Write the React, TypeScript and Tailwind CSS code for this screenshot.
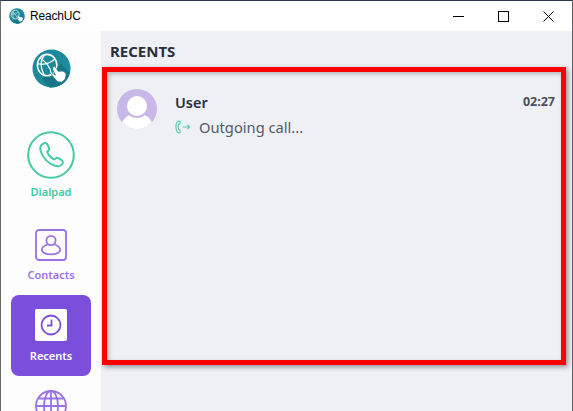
function Logo({ size }: { size: number }) {
  return (
    <svg width={size} height={size} viewBox="0 0 40 40" className="shrink-0">
      <circle cx="20" cy="20" r="19.5" fill="#1d8a9c" />
      <path d="M10 30 L18 39.4 A19.5 19.5 0 0 0 38.6 25 L30 15 Z" fill="#187688" />
      <ellipse cx="15.5" cy="16.5" rx="10" ry="11" fill="#1d8a9c" stroke="#fff" strokeWidth="1.6" />
      <path d="M13 6 C8.5 11 8.5 19 12.5 27 M6 15 C12 17 19 14 24 10 M8 9.5 C14 12 19 19 20 26" fill="none" stroke="#fff" strokeWidth="1.2" />
      <path d="M21.5 18.5 C22.5 17.6 23.6 18 24.2 19 L27 22.8 L31 22.6 C33.5 23 35 24.8 35 26.5 L34 31 L30.5 34 L26 33.5 L20.5 27 C19.8 26 21 24.6 22.2 25.4 L24 26.8 L21 21 Z" fill="#fff" stroke="#187688" strokeWidth="0.8" />
    </svg>
  );
}

function DialpadIcon() {
  return (
    <svg width="48" height="48" viewBox="0 0 48 48" fill="none" stroke="#45c9a1" strokeWidth="2">
      <circle cx="24" cy="24" r="22.8" />
      <path d="M16.5 12.4 C13.2 14 12.6 17.4 14 21 C16.4 27.2 21.6 32.6 28 34.8 C31.4 35.8 34.8 34.6 35.8 31.8 C36.2 30.4 35.6 29.6 34.6 29 L31.2 27.2 C30.2 26.6 29.4 26.8 28.6 27.6 L27.4 28.6 C24.6 27.6 21.2 24 20.2 20.8 L21.4 19.6 C22.2 18.8 22.4 18 22 17 L20.4 13.4 C19.6 12 18 11.8 16.5 12.4 Z" strokeLinejoin="round" />
    </svg>
  );
}

function ContactsIcon() {
  return (
    <svg width="32" height="32" viewBox="0 0 32 32" fill="none" stroke="#9a72e8" strokeWidth="1.8">
      <rect x="1" y="1" width="30" height="30" rx="3" />
      <circle cx="16" cy="11.5" r="4.6" />
      <path d="M12.5 15.5 C8.5 17 6.8 19 6.8 21 C6.8 23.5 10.5 25.4 16 25.4 C21.5 25.4 25.2 23.5 25.2 21 C25.2 19 23.5 17 19.5 15.5" />
    </svg>
  );
}

function GlobeIcon() {
  return (
    <svg width="32" height="32" viewBox="0 0 32 32" fill="none" stroke="#9a72e8" strokeWidth="1.8">
      <circle cx="16" cy="16" r="15" />
      <ellipse cx="16" cy="16" rx="7" ry="15" />
      <path d="M16 1 V31 M1 16 H31 M3.5 8.5 H28.5 M3.5 23.5 H28.5" />
    </svg>
  );
}

function CallOutIcon() {
  return (
    <svg width="16" height="14" viewBox="0 0 16 14" fill="none" stroke="#5fcdaa" strokeWidth="1.2">
      <path d="M3.5 1 C1.6 1.6 1 3.5 1 6.5 C1 9.5 1.6 12 3.5 13 L5.2 12.4 L4.8 9.8 L3.6 9.6 C3.2 8.4 3.2 5.4 3.6 4.2 L4.8 4 L5.2 1.6 Z" strokeLinejoin="round" />
      <path d="M7.5 7 H14.5 M12.4 5 L14.5 7 L12.4 9" />
    </svg>
  );
}

export default function App() {
  return (
    <div className="relative flex h-[411px] w-[573px] flex-col overflow-hidden border-t border-r border-l border-t-[#2b3a4d] border-r-[#5a5f66] border-l-[#6b6b6b] bg-white font-['Noto_Sans','Open_Sans',sans-serif] text-[#2a2f3a]">
      {/* Title bar */}
      <div className="flex h-[30px] shrink-0 items-center bg-white pl-[8px]">
        <Logo size={16} />
        <span className="ml-[5px] font-['Liberation_Sans',sans-serif] text-[12px] tracking-[-0.2px] text-black">ReachUC</span>
        <div className="ml-auto flex items-center">
          <svg width="11" height="11" viewBox="0 0 11 11" className="mr-[34px]" stroke="#000" fill="none">
            <path d="M0 5.5 H11" />
          </svg>
          <svg width="11" height="11" viewBox="0 0 11 11" className="mr-[34px]" stroke="#000" fill="none">
            <rect x="0.5" y="0.5" width="10" height="10" />
          </svg>
          <svg width="11" height="11" viewBox="0 0 11 11" className="mr-[18px]" stroke="#000" fill="none">
            <path d="M0.5 0.5 L10.5 10.5 M10.5 0.5 L0.5 10.5" />
          </svg>
        </div>
      </div>

      <div className="flex min-h-0 flex-1">
        {/* Sidebar */}
        <aside className="flex w-[100px] shrink-0 flex-col items-center overflow-hidden bg-[#fdfdfe]">
          <div className="mt-[18px]">
            <Logo size={39} />
          </div>
          <div className="mt-[43px] shrink-0">
            <DialpadIcon />
          </div>
          <span className="mt-[6px] text-[11px] leading-[14px] font-semibold text-[#45c9a1]">Dialpad</span>
          <div className="mt-[30px] shrink-0">
            <ContactsIcon />
          </div>
          <span className="mt-[7px] text-[11px] leading-[14px] font-semibold text-[#9a72e8]">Contacts</span>
          <div className="mt-[13px] flex h-[81px] w-[80px] shrink-0 flex-col items-center rounded-[8px] bg-[#7b4fdc] pt-[14px]">
            <div className="flex h-[32px] w-[32px] items-center justify-center rounded-[2px] bg-white">
              <svg width="22" height="22" viewBox="0 0 22 22" fill="none" stroke="#7b4fdc" strokeWidth="1.8">
                <circle cx="11" cy="11" r="9.5" />
                <path d="M11.5 5.5 V11.5 H7" />
              </svg>
            </div>
            <span className="mt-[8px] text-[11px] leading-[14px] font-semibold text-white">Recents</span>
          </div>
          <div className="mt-[14px] shrink-0">
            <GlobeIcon />
          </div>
        </aside>

        {/* Main */}
        <main className="relative flex-1 bg-[#eff0f6] pl-[9px]">
          <h1 className="mt-[10px] text-[15px] leading-[20px] font-bold text-[#2a2f3a]">RECENTS</h1>
          <div className="mt-[28px] flex pr-[17px] pl-[7px]">
            <div className="relative h-[40px] w-[40px] shrink-0 overflow-hidden rounded-full bg-[#c8b8e8]">
              <div className="absolute top-[25px] left-[4px] h-[20px] w-[32px] rounded-t-[14px] bg-white" />
              <div className="absolute top-[5px] left-[8px] h-[24px] w-[24px] rounded-full border-2 border-[#c8b8e8] bg-white" />
            </div>
            <div className="ml-[18px] flex-1">
              <div className="mt-[4px] flex items-center justify-between leading-[18px]">
                <span className="text-[14.5px] font-semibold text-[#2a2f3a]">User</span>
                <span className="text-[12.5px] font-bold text-[#4a4f5a]">02:27</span>
              </div>
              <div className="mt-[7px] flex items-center">
                <CallOutIcon />
                <span className="ml-[8px] text-[14.7px] leading-[18px] text-[#555a66]">Outgoing call...</span>
              </div>
            </div>
          </div>
        </main>
      </div>

      {/* Annotation box */}
      <div className="absolute top-[66px] left-[101px] h-[298px] w-[464px] border-[5px] border-[#ff0000] shadow-[2px_2px_5px_rgba(0,0,0,0.4),inset_2px_2px_4px_rgba(0,0,0,0.25)]" />
    </div>
  );
}
